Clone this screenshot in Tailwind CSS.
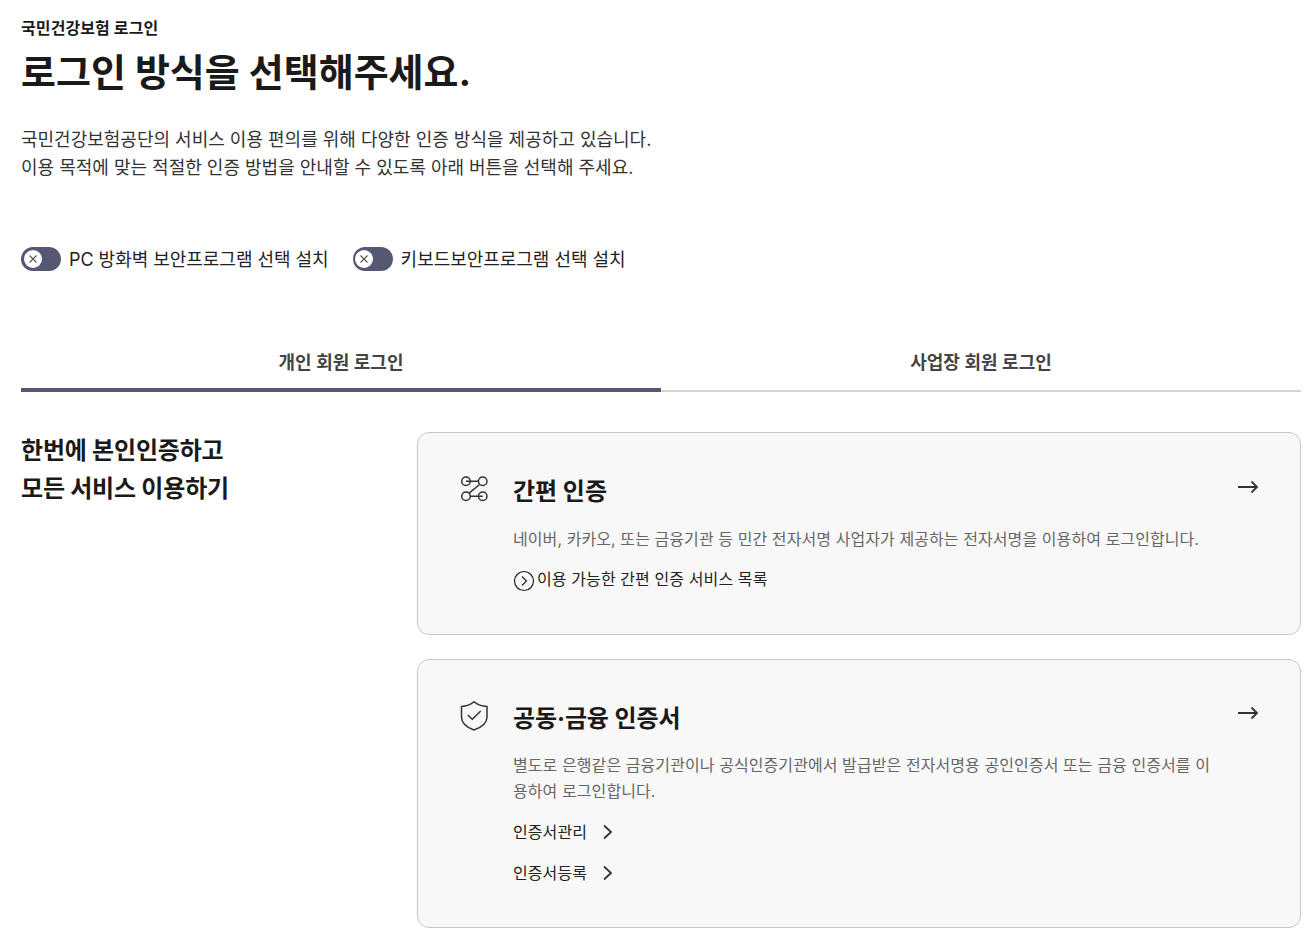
<!DOCTYPE html>
<html lang="ko">
<head>
<meta charset="UTF-8">
<title>국민건강보험 로그인</title>
<script src="https://cdn.jsdelivr.net/npm/@tailwindcss/browser@4"></script>
</head>
<body class="bg-white text-[#1a1a1a] font-['Inter','Noto_Sans_CJK_KR',sans-serif] overflow-hidden">
<div class="w-[1280px] ml-[21px] h-[934px] overflow-hidden">
  <!-- Heading -->
  <p class="pt-[17px] text-[16px] leading-[22px] font-bold tracking-[0.1px]">국민건강보험 로그인</p>
  <h1 class="mt-[5px] text-[38px] leading-[56px] font-bold">로그인 방식을 선택해주세요.</h1>
  <div class="mt-[26px] text-[18px] leading-[28px] text-[#333]">
    <p>국민건강보험공단의 서비스 이용 편의를 위해 다양한 인증 방식을 제공하고 있습니다.</p>
    <p>이용 목적에 맞는 적절한 인증 방법을 안내할 수 있도록 아래 버튼을 선택해 주세요.</p>
  </div>

  <!-- Toggles -->
  <div class="mt-[64px] flex items-center gap-[24px] text-[18px] leading-[28px] text-[#222] tracking-[-0.03px]">
    <label class="flex items-center gap-[8px]">
      <span class="w-[40px] h-[24px] mb-[2px] rounded-full bg-[#555873] flex items-center pl-[2.5px]">
        <span class="w-[18px] h-[18px] rounded-full bg-white flex items-center justify-center">
          <svg width="10" height="10" viewBox="0 0 10 10" fill="none" stroke="#555" stroke-width="1.100"><path d="M1.500 1.500l7 7M8.500 1.500l-7 7"/></svg>
        </span>
      </span>
      PC 방화벽 보안프로그램 선택 설치
    </label>
    <label class="flex items-center gap-[8px]">
      <span class="w-[40px] h-[24px] mb-[2px] rounded-full bg-[#555873] flex items-center pl-[2.5px]">
        <span class="w-[18px] h-[18px] rounded-full bg-white flex items-center justify-center">
          <svg width="10" height="10" viewBox="0 0 10 10" fill="none" stroke="#555" stroke-width="1.100"><path d="M1.500 1.500l7 7M8.500 1.500l-7 7"/></svg>
        </span>
      </span>
      키보드보안프로그램 선택 설치
    </label>
  </div>

  <!-- Tabs -->
  <div class="mt-[64px] grid grid-cols-2 items-end text-[18px] font-semibold text-[#444]">
    <div class="h-[54px] pt-[11px] leading-[28px] text-center border-b-4 border-[#555873]">개인 회원 로그인</div>
    <div class="h-[54px] pt-[11px] leading-[28px] text-center border-b-2 border-[#d4d4d4]">사업장 회원 로그인</div>
  </div>

  <!-- Body -->
  <div class="mt-[40px] flex">
    <div class="w-[396px] shrink-0 text-[24px] leading-[38px] font-bold tracking-[-0.2px]">
      <p>한번에 본인인증하고</p>
      <p>모든 서비스 이용하기</p>
    </div>
    <div class="flex-1 flex flex-col gap-[24px]">
      <div class="h-[203px] rounded-[12px] border border-[#c8c8c8] bg-[#f8f8f8] pl-[42px] pr-[41px] pt-[41px] flex gap-[25px]">
        <svg class="mt-[2px] shrink-0" width="28" height="28" viewBox="0 0 28 28" fill="none" stroke="#333" stroke-width="1.500">
          <circle cx="6" cy="5.300" r="4.300"/><circle cx="22.700" cy="5.300" r="4.300"/><circle cx="6" cy="20.300" r="4.300"/><circle cx="22.700" cy="20.300" r="4.300"/>
          <path d="M6 5.300h12.400M10.300 20.300h12.400M19.500 8.500L9.200 17.100"/>
        </svg>
        <div class="flex-1 min-w-0">
          <div class="flex justify-between">
            <h2 class="text-[24px] leading-[36px] font-bold">간편 인증</h2>
            <svg class="mt-[2px]" width="22" height="22" viewBox="0 0 22 22" fill="none" stroke="#333" stroke-width="1.800"><path d="M1 11h19M14.500 5.500L20 11l-5.500 5.500"/></svg>
          </div>
          <p class="mt-[16px] text-[16px] leading-[26px] text-[#666] tracking-[0.08px]">네이버, 카카오, 또는 금융기관 등 민간 전자서명 사업자가 제공하는 전자서명을 이용하여 로그인합니다.</p>
          <div class="mt-[14px] flex items-center text-[16px] leading-[26px] text-[#222] tracking-[0.1px]">
            <svg width="22" height="22" viewBox="0 0 22 22" fill="none" stroke="#222" stroke-width="1.200" class="mr-[2px] mt-[3px]"><circle cx="11" cy="11" r="9.500"/><path d="M9 6.500l4.500 4.500L9 15.500"/></svg>
            이용 가능한 간편 인증 서비스 목록
          </div>
        </div>
      </div>
      <div class="h-[269px] rounded-[12px] border border-[#c8c8c8] bg-[#f8f8f8] pl-[42px] pr-[41px] pt-[41px] flex gap-[25px]">
        <svg class="mt-[-1px] shrink-0" width="28" height="32" viewBox="0 0 28 32" fill="none" stroke="#333" stroke-width="1.500">
          <path d="M14 1.800Q19 6 27 6.500V17C27 24 21 27.500 14 30C7 27.500 1.500 24 1.500 17V6.500Q9 6 14 1.800z"/><path d="M7.700 15L12.300 19.300L20.700 11"/>
        </svg>
        <div class="flex-1 min-w-0">
          <div class="flex justify-between">
            <h2 class="text-[24px] leading-[36px] font-bold tracking-[-0.1px]">공동·금융 인증서</h2>
            <svg class="mt-[1px]" width="22" height="22" viewBox="0 0 22 22" fill="none" stroke="#333" stroke-width="1.800"><path d="M1 11h19M14.500 5.500L20 11l-5.500 5.500"/></svg>
          </div>
          <p class="mt-[15px] text-[16px] leading-[26px] text-[#666] tracking-[0.08px] w-[700px]">별도로 은행같은 금융기관이나 공식인증기관에서 발급받은 전자서명용 공인인증서 또는 금융 인증서를 이용하여 로그인합니다.</p>
          <div class="mt-[15px] flex items-center gap-[14px] text-[16px] leading-[26px] text-[#222] tracking-[0.08px]">
            인증서관리
            <svg width="14" height="16" viewBox="0 0 14 16" fill="none" stroke="#333" stroke-width="1.800"><path d="M3 1.500L10 8l-7 6.500"/></svg>
          </div>
          <div class="mt-[15px] flex items-center gap-[14px] text-[16px] leading-[26px] text-[#222] tracking-[0.08px]">
            인증서등록
            <svg width="14" height="16" viewBox="0 0 14 16" fill="none" stroke="#333" stroke-width="1.800"><path d="M3 1.500L10 8l-7 6.500"/></svg>
          </div>
        </div>
      </div>
    </div>
  </div>
</div>
</body>
</html>
